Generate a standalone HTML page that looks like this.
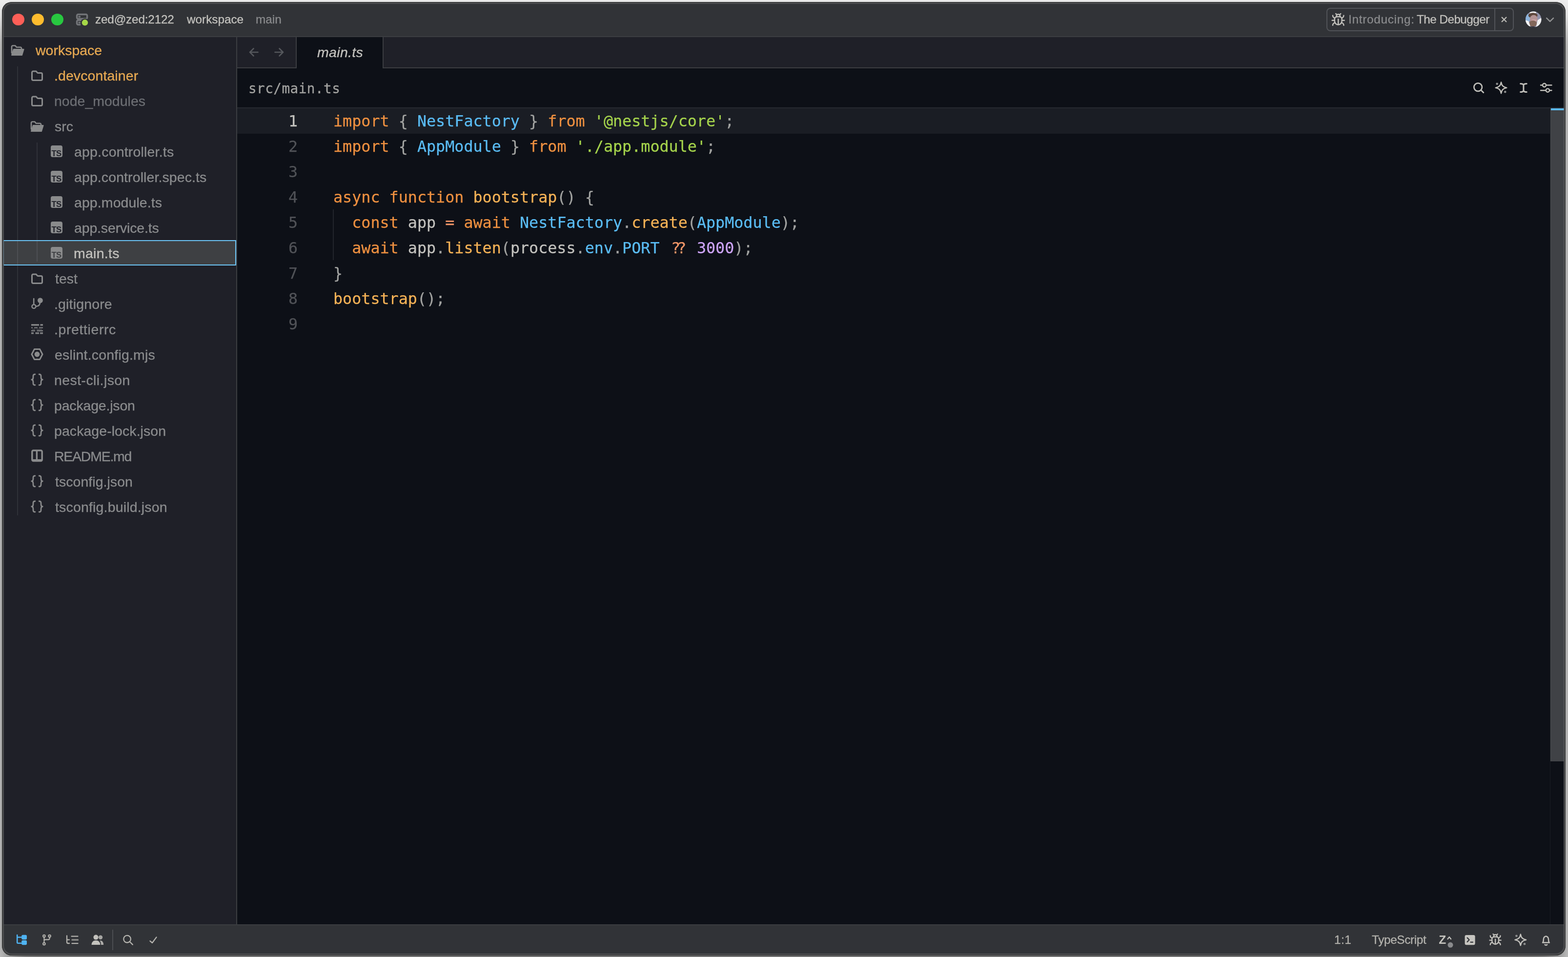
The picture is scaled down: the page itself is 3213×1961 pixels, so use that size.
<!DOCTYPE html>
<html lang="en">
<head>
<meta charset="utf-8">
<title>main.ts — workspace</title>
<style>
html,body{margin:0;padding:0}
body{width:3213px;height:1961px;overflow:hidden;position:relative;background:#f0f0f0;
  font-family:"Liberation Sans",sans-serif;}
#win{position:absolute;left:4px;top:4px;width:3204px;height:1954px;border-radius:20px;overflow:hidden;background:#313337;box-shadow:0 44px 60px rgba(0,0,0,.56)}
#c{position:absolute;left:-4px;top:-4px;width:3213px;height:1961px}
.t,.cl,.ln{will-change:transform}
.cl,.ln{-webkit-text-stroke:0.25px currentColor}
#c div{position:absolute;box-sizing:border-box}
#ring{position:absolute;left:0;top:0;right:0;bottom:0;border-radius:20px;pointer-events:none;
  box-shadow:inset 0 0 0 1px #323333,inset 0 0 0 2px #474849,inset 0 0 0 3px rgba(66,67,69,.9),inset 0 0 0 4px rgba(98,99,101,.72)}
.t{white-space:pre;line-height:1;-webkit-text-stroke:0.3px currentColor}
svg{position:absolute;left:0;top:0;overflow:visible}
/* title bar */
#titlebar{left:6px;top:6px;width:3201px;height:69px;background:#313337}
#tb-border{left:6px;top:74.300px;width:3201px;height:2px;background:#3b3d41}
.tl{width:24.600px;height:24.600px;border-radius:50%;top:27.600px}
/* sidebar */
#sidebar{left:6px;top:76px;width:478px;height:1818px;background:#1f2028}
#sb-border{left:484px;top:76px;width:2px;height:1818px;background:#3b3d41}
#sel{left:6px;top:492px;width:478px;height:52px;background:#3e4043;border:2px solid #6cc4f4}
.guide{width:2px;background:#2f3138}
/* editor */
#tabbar{left:486px;top:76px;width:2721px;height:63px;background:#1f2028}
#tab-border{left:486px;top:138px;width:2721px;height:2px;background:#3b3d41}
#nav-border{left:606px;top:76px;width:2px;height:64px;background:#3b3d41}
#tab{left:608px;top:76px;width:176px;height:64px;background:#0d1017}
#tab-r{left:784px;top:76px;width:2px;height:64px;background:#3b3d41}
#editor{left:486px;top:140px;width:2721px;height:1754px;background:#0d1017}
#tool-border{left:486px;top:219.500px;width:2721px;height:2px;background:#262930}
#activeline{left:486px;top:221.500px;width:2691px;height:52px;background:#1a1d24}
.ln{left:486px;width:124px;height:52px;line-height:52px;text-align:right;font-family:"DejaVu Sans Mono","Liberation Mono",monospace;font-size:31.73px;padding-top:1.3px}
.cl{left:682.6px;height:52px;line-height:52px;white-space:pre;font-family:"DejaVu Sans Mono","Liberation Mono",monospace;font-size:31.73px;color:#c3c2be;padding-top:1.3px}
.kw{color:#ee9040}
.fn{color:#f5b256}
.st{color:#a5d34c}
.ty{color:#5abcf4}
.num{color:#cda4f7}
.pu{color:#a2a3a1}
.op{color:#f29668}
.prop{color:#5abcf4}
.var{color:#c3c2be}
#cguide{left:682px;top:429px;width:2px;height:104px;background:#22252c}
#sb-track{left:3176px;top:221px;width:1px;height:1673px;background:#1a1d23}
#sb-thumb{left:3177px;top:222px;width:29.500px;height:1337.500px;background:#404246;box-shadow:inset 1px -1px 0 #484a4e}
#sb-mark{left:3178px;top:222px;width:28px;height:4px;background:#5ab9f0}
/* status bar */
#status{left:6px;top:1894px;width:3201px;height:62px;background:#313337}
#st-border{left:6px;top:1894px;width:3201px;height:2px;background:#3b3d41}
#st-div{left:230px;top:1905px;width:2px;height:42px;background:#4b4d51}
/* banner */
#banner{left:2718px;top:16px;width:384px;height:48px;border:2px solid #515358;border-radius:8px}
#banner-div{left:3062px;top:17px;width:2px;height:46px;background:#515358}
#avatar{left:3126px;top:24px;width:32px;height:32px;border-radius:50%;overflow:hidden;
  background:
   radial-gradient(circle at 78% 82%,#f2f2f2 0,#f2f2f2 18%,rgba(242,242,242,0) 34%),
   radial-gradient(circle at 52% 58%,#c59a86 0,#b88a76 26%,rgba(150,105,85,0) 48%),
   radial-gradient(circle at 50% 30%,#5a4336 0,#5a4336 30%,rgba(90,67,54,0) 52%),
   linear-gradient(135deg,#8fb0dc 0%,#6f8dbd 45%,#7a6a66 70%,#d8d8d8 100%)}
</style>
</head>
<body>
<div id="win">
<div id="c">
<div id="titlebar"></div><div id="tb-border"></div>
<div class="tl" style="left:25.400px;background:#fe5f57"></div>
<div class="tl" style="left:65.400px;background:#febc2e"></div>
<div class="tl" style="left:105.400px;background:#28c840"></div>
<div id="banner"></div><div id="banner-div"></div>

<div id="sidebar"></div><div id="sb-border"></div>
<div class="guide" style="left:34.5px;top:136px;height:920px"></div>
<div class="guide" style="left:74.5px;top:292px;height:244px"></div>
<div id="sel"></div>
<div class="guide" style="left:34.5px;top:494px;height:48px;background:#4d4f53"></div>
<div class="guide" style="left:74.5px;top:494px;height:42px;background:#4d4f53"></div>

<div id="tabbar"></div><div id="tab-border"></div><div id="nav-border"></div>
<div id="editor"></div>
<div id="tab"></div><div id="tab-r"></div>
<div id="tool-border"></div>
<div id="activeline"></div>
<div id="cguide"></div>
<div id="sb-track"></div><div id="sb-thumb"></div><div id="sb-mark"></div>
<div class="ln" style="top:221px;color:#c3c2be">1</div>
<div class="cl" style="top:221px"><span class="kw">import</span> <span class="pu">{</span> <span class="ty">NestFactory</span> <span class="pu">}</span> <span class="kw">from</span> <span class="st">'@nestjs/core'</span><span class="pu">;</span></div>
<div class="ln" style="top:273px;color:#505257">2</div>
<div class="cl" style="top:273px"><span class="kw">import</span> <span class="pu">{</span> <span class="ty">AppModule</span> <span class="pu">}</span> <span class="kw">from</span> <span class="st">'./app.module'</span><span class="pu">;</span></div>
<div class="ln" style="top:325px;color:#505257">3</div>
<div class="ln" style="top:377px;color:#505257">4</div>
<div class="cl" style="top:377px"><span class="kw">async</span> <span class="kw">function</span> <span class="fn">bootstrap</span><span class="pu">()</span> <span class="pu">{</span></div>
<div class="ln" style="top:429px;color:#505257">5</div>
<div class="cl" style="top:429px">  <span class="kw">const</span> <span class="var">app</span> <span class="op">=</span> <span class="kw">await</span> <span class="ty">NestFactory</span><span class="pu">.</span><span class="fn">create</span><span class="pu">(</span><span class="ty">AppModule</span><span class="pu">);</span></div>
<div class="ln" style="top:481px;color:#505257">6</div>
<div class="cl" style="top:481px">  <span class="kw">await</span> <span class="var">app</span><span class="pu">.</span><span class="fn">listen</span><span class="pu">(</span><span class="var">process</span><span class="pu">.</span><span class="prop">env</span><span class="pu">.</span><span class="prop">PORT</span> <span class="op"><span style="position:relative;left:4.5px">?</span><span style="position:relative;left:-2.5px">?</span></span> <span class="num">3000</span><span class="pu">);</span></div>
<div class="ln" style="top:533px;color:#505257">7</div>
<div class="cl" style="top:533px"><span class="pu">}</span></div>
<div class="ln" style="top:585px;color:#505257">8</div>
<div class="cl" style="top:585px"><span class="fn">bootstrap</span><span class="pu">();</span></div>
<div class="ln" style="top:637px;color:#505257">9</div>

<div id="status"></div><div id="st-border"></div><div id="st-div"></div>

<div class="t" id="t_host" style="left:195.00px;top:27.93px;font-size:24.3px;color:#c3c2be;letter-spacing:-0.182px;font-family:'Liberation Sans', sans-serif;">zed@zed:2122</div>
<div class="t" id="t_ws" style="left:382.50px;top:27.93px;font-size:24.3px;color:#c3c2be;letter-spacing:0.000px;font-family:'Liberation Sans', sans-serif;">workspace</div>
<div class="t" id="t_branch" style="left:524.00px;top:27.93px;font-size:24.3px;color:#8a8b8d;letter-spacing:0.000px;font-family:'Liberation Sans', sans-serif;">main</div>
<div class="t" id="t_intro" style="left:2763.00px;top:27.93px;font-size:24.3px;color:#8a8b8d;letter-spacing:0.727px;font-family:'Liberation Sans', sans-serif;">Introducing:</div>
<div class="t" id="t_dbg" style="left:2903.00px;top:27.93px;font-size:24.3px;color:#c3c2be;letter-spacing:-0.546px;font-family:'Liberation Sans', sans-serif;">The Debugger</div>
<div class="t" id="s0" style="left:72.50px;top:89.37px;font-size:28.5px;color:#e6a852;letter-spacing:0.000px;font-family:'Liberation Sans', sans-serif;">workspace</div>
<div class="t" id="s1" style="left:111.00px;top:141.37px;font-size:28.5px;color:#e6a852;letter-spacing:0.084px;font-family:'Liberation Sans', sans-serif;">.devcontainer</div>
<div class="t" id="s2" style="left:111.00px;top:193.37px;font-size:28.5px;color:#6c6e73;letter-spacing:0.000px;font-family:'Liberation Sans', sans-serif;">node_modules</div>
<div class="t" id="s3" style="left:112.00px;top:245.37px;font-size:28.5px;color:#8a8b8d;letter-spacing:0.000px;font-family:'Liberation Sans', sans-serif;">src</div>
<div class="t" id="s4" style="left:151.50px;top:297.37px;font-size:28.5px;color:#8a8b8d;letter-spacing:0.187px;font-family:'Liberation Sans', sans-serif;">app.controller.ts</div>
<div class="t" id="s5" style="left:151.50px;top:349.37px;font-size:28.5px;color:#8a8b8d;letter-spacing:0.095px;font-family:'Liberation Sans', sans-serif;">app.controller.spec.ts</div>
<div class="t" id="s6" style="left:151.50px;top:401.37px;font-size:28.5px;color:#8a8b8d;letter-spacing:0.084px;font-family:'Liberation Sans', sans-serif;">app.module.ts</div>
<div class="t" id="s7" style="left:151.50px;top:453.37px;font-size:28.5px;color:#8a8b8d;letter-spacing:-0.153px;font-family:'Liberation Sans', sans-serif;">app.service.ts</div>
<div class="t" id="s8" style="left:150.50px;top:505.37px;font-size:28.5px;color:#c3c2be;letter-spacing:0.254px;font-family:'Liberation Sans', sans-serif;">main.ts</div>
<div class="t" id="s9" style="left:113.00px;top:557.37px;font-size:28.5px;color:#8a8b8d;letter-spacing:0.000px;font-family:'Liberation Sans', sans-serif;">test</div>
<div class="t" id="s10" style="left:111.00px;top:609.37px;font-size:28.5px;color:#8a8b8d;letter-spacing:0.161px;font-family:'Liberation Sans', sans-serif;">.gitignore</div>
<div class="t" id="s11" style="left:111.00px;top:661.37px;font-size:28.5px;color:#8a8b8d;letter-spacing:0.600px;font-family:'Liberation Sans', sans-serif;">.prettierrc</div>
<div class="t" id="s12" style="left:112.00px;top:713.37px;font-size:28.5px;color:#8a8b8d;letter-spacing:0.188px;font-family:'Liberation Sans', sans-serif;">eslint.config.mjs</div>
<div class="t" id="s13" style="left:111.00px;top:765.37px;font-size:28.5px;color:#8a8b8d;letter-spacing:0.416px;font-family:'Liberation Sans', sans-serif;">nest-cli.json</div>
<div class="t" id="s14" style="left:111.00px;top:817.37px;font-size:28.5px;color:#8a8b8d;letter-spacing:-0.182px;font-family:'Liberation Sans', sans-serif;">package.json</div>
<div class="t" id="s15" style="left:111.00px;top:869.37px;font-size:28.5px;color:#8a8b8d;letter-spacing:0.060px;font-family:'Liberation Sans', sans-serif;">package-lock.json</div>
<div class="t" id="s16" style="left:111.00px;top:921.37px;font-size:28.5px;color:#8a8b8d;letter-spacing:-1.250px;font-family:'Liberation Sans', sans-serif;">README.md</div>
<div class="t" id="s17" style="left:113.00px;top:973.37px;font-size:28.5px;color:#8a8b8d;letter-spacing:0.040px;font-family:'Liberation Sans', sans-serif;">tsconfig.json</div>
<div class="t" id="s18" style="left:113.00px;top:1025.37px;font-size:28.5px;color:#8a8b8d;letter-spacing:0.167px;font-family:'Liberation Sans', sans-serif;">tsconfig.build.json</div>
<div class="t" id="tabtxt" style="left:650.00px;top:92.87px;font-size:28.5px;color:#c3c2be;letter-spacing:0.333px;font-family:'Liberation Sans', sans-serif;font-style:italic;">main.ts</div>
<div class="t" id="crumb" style="left:509.00px;top:168.42px;font-size:27.6px;color:#a2a2a0;letter-spacing:0.500px;font-family:'DejaVu Sans Mono', 'Liberation Mono', monospace;">src/main.ts</div>
<div class="t" id="st_pos" style="left:2734.00px;top:1914.43px;font-size:24.3px;color:#b4b3ae;letter-spacing:0.500px;font-family:'Liberation Sans', sans-serif;">1:1</div>
<div class="t" id="st_lang" style="left:2811.00px;top:1914.43px;font-size:24.3px;color:#b4b3ae;letter-spacing:-0.333px;font-family:'Liberation Sans', sans-serif;">TypeScript</div>

<svg width="3213" height="1961" viewBox="0 0 3213 1961">
<!-- sidebar icons -->
<g transform="translate(22.00 91.50)" stroke="#8a8b8c" stroke-linejoin="round" stroke-linecap="round"><path d="M2 17V4.2a2.2 2.2 0 0 1 2.2-2.2h5l2.6 3.2h8a2.2 2.2 0 0 1 2.2 2.2v2" fill="none" stroke-width="2.6"/><path d="M2.2 21.3L6 9.6h20.4l-3.6 11.7z" fill="#8a8b8c" stroke-width="2.4"/></g>
<path transform="translate(64.00 144.00)" d="M1.5 4.5a2.5 2.5 0 0 1 2.5-2.5h5.2a2 2 0 0 1 1.6.8l1.4 1.9a2 2 0 0 0 1.6.8h6.2a2.5 2.5 0 0 1 2.5 2.5v10a2.5 2.5 0 0 1-2.5 2.5h-16a2.5 2.5 0 0 1-2.5-2.5z" fill="none" stroke="#8a8b8c" stroke-width="3" stroke-linejoin="round"/>
<path transform="translate(64.00 196.00)" d="M1.5 4.5a2.5 2.5 0 0 1 2.5-2.5h5.2a2 2 0 0 1 1.6.8l1.4 1.9a2 2 0 0 0 1.6.8h6.2a2.5 2.5 0 0 1 2.5 2.5v10a2.5 2.5 0 0 1-2.5 2.5h-16a2.5 2.5 0 0 1-2.5-2.5z" fill="none" stroke="#8a8b8c" stroke-width="3" stroke-linejoin="round"/>
<g transform="translate(62.00 247.50)" stroke="#8a8b8c" stroke-linejoin="round" stroke-linecap="round"><path d="M2 17V4.2a2.2 2.2 0 0 1 2.2-2.2h5l2.6 3.2h8a2.2 2.2 0 0 1 2.2 2.2v2" fill="none" stroke-width="2.6"/><path d="M2.2 21.3L6 9.6h20.4l-3.6 11.7z" fill="#8a8b8c" stroke-width="2.4"/></g>
<g transform="translate(104.00 298.00)"><rect x="0" y="0" width="24" height="24" rx="4" fill="#8a8b8c"/><text x="11.6" y="22" font-family="Liberation Sans, sans-serif" font-weight="700" font-size="16.8" text-anchor="middle" fill="#1f2028" letter-spacing="-0.7">TS</text></g>
<g transform="translate(104.00 350.00)"><rect x="0" y="0" width="24" height="24" rx="4" fill="#8a8b8c"/><text x="11.6" y="22" font-family="Liberation Sans, sans-serif" font-weight="700" font-size="16.8" text-anchor="middle" fill="#1f2028" letter-spacing="-0.7">TS</text></g>
<g transform="translate(104.00 402.00)"><rect x="0" y="0" width="24" height="24" rx="4" fill="#8a8b8c"/><text x="11.6" y="22" font-family="Liberation Sans, sans-serif" font-weight="700" font-size="16.8" text-anchor="middle" fill="#1f2028" letter-spacing="-0.7">TS</text></g>
<g transform="translate(104.00 454.00)"><rect x="0" y="0" width="24" height="24" rx="4" fill="#8a8b8c"/><text x="11.6" y="22" font-family="Liberation Sans, sans-serif" font-weight="700" font-size="16.8" text-anchor="middle" fill="#1f2028" letter-spacing="-0.7">TS</text></g>
<g transform="translate(104.00 506.00)"><rect x="0" y="0" width="24" height="24" rx="4" fill="#8a8b8c"/><text x="11.6" y="22" font-family="Liberation Sans, sans-serif" font-weight="700" font-size="16.8" text-anchor="middle" fill="#3e4043" letter-spacing="-0.7">TS</text></g>
<path transform="translate(64.00 560.00)" d="M1.5 4.5a2.5 2.5 0 0 1 2.5-2.5h5.2a2 2 0 0 1 1.6.8l1.4 1.9a2 2 0 0 0 1.6.8h6.2a2.5 2.5 0 0 1 2.5 2.5v10a2.5 2.5 0 0 1-2.5 2.5h-16a2.5 2.5 0 0 1-2.5-2.5z" fill="none" stroke="#8a8b8c" stroke-width="3" stroke-linejoin="round"/>
<g transform="translate(64.00 609.90)" stroke="#8a8b8c" stroke-width="2.6" fill="none" stroke-linecap="round"><path d="M5.2 2.2v11.3"/><circle cx="5.4" cy="18" r="3.9"/><circle cx="18.4" cy="5.7" r="5.4" fill="#8a8b8c" stroke="none"/><path d="M17.8 10.5c0 5-3.5 7-8.3 7.3"/></g>
<g transform="translate(64.00 664.00)" fill="#8a8b8c"><rect x="0" y="0.2" width="16" height="3.2" opacity="1"/><rect x="18.5" y="0.2" width="5.5" height="3.2" opacity="1"/><rect x="0" y="6.4" width="3" height="2.2" opacity="0.85"/><rect x="6" y="6.4" width="7" height="2.2" opacity="0.85"/><rect x="16" y="6.4" width="8" height="2.2" opacity="0.85"/><rect x="2" y="10" width="6" height="1.4" opacity="0.45"/><rect x="11" y="10" width="11" height="1.4" opacity="0.45"/><rect x="0" y="12.6" width="8" height="2.4" opacity="0.9"/><rect x="11.5" y="12.6" width="12.5" height="2.4" opacity="0.9"/><rect x="0" y="17" width="5" height="3.4" opacity="0.9"/><rect x="8.5" y="17" width="7.5" height="3.4" opacity="0.9"/><rect x="18" y="17" width="6" height="3.4" opacity="0.9"/></g>
<g transform="translate(76.00 726.00)"><path d="M-11 0L-5.6 -10.4H5.6L11 0L5.6 10.4H-5.6Z" fill="none" stroke="#8a8b8c" stroke-width="3" stroke-linejoin="round"/><circle r="5.4" fill="#8a8b8c"/></g>
<g transform="translate(76.00 778.00)" fill="none" stroke="#8a8b8c" stroke-width="2.8" stroke-linecap="round" stroke-linejoin="round"><path d="M-4.2 -11C-8.4 -11 -8 -8.4 -8 -5.4C-8 -2.2 -8.6 0 -11.2 0C-8.6 0 -8 2.2 -8 5.4C-8 8.4 -8.4 11 -4.2 11"/><path d="M4.2 -11C8.4 -11 8 -8.4 8 -5.4C8 -2.2 8.6 0 11.2 0C8.6 0 8 2.2 8 5.4C8 8.4 8.4 11 4.2 11"/></g>
<g transform="translate(76.00 830.00)" fill="none" stroke="#8a8b8c" stroke-width="2.8" stroke-linecap="round" stroke-linejoin="round"><path d="M-4.2 -11C-8.4 -11 -8 -8.4 -8 -5.4C-8 -2.2 -8.6 0 -11.2 0C-8.6 0 -8 2.2 -8 5.4C-8 8.4 -8.4 11 -4.2 11"/><path d="M4.2 -11C8.4 -11 8 -8.4 8 -5.4C8 -2.2 8.6 0 11.2 0C8.6 0 8 2.2 8 5.4C8 8.4 8.4 11 4.2 11"/></g>
<g transform="translate(76.00 882.00)" fill="none" stroke="#8a8b8c" stroke-width="2.8" stroke-linecap="round" stroke-linejoin="round"><path d="M-4.2 -11C-8.4 -11 -8 -8.4 -8 -5.4C-8 -2.2 -8.6 0 -11.2 0C-8.6 0 -8 2.2 -8 5.4C-8 8.4 -8.4 11 -4.2 11"/><path d="M4.2 -11C8.4 -11 8 -8.4 8 -5.4C8 -2.2 8.6 0 11.2 0C8.6 0 8 2.2 8 5.4C8 8.4 8.4 11 4.2 11"/></g>
<g transform="translate(64.00 921.20)" fill="none" stroke="#8a8b8c" stroke-linejoin="round"><path d="M1.8 4.4a2.6 2.6 0 0 1 2.6-2.6h15.2a2.6 2.6 0 0 1 2.6 2.6v16.4a2.6 2.6 0 0 1-2.6 2.6h-15.2a2.6 2.6 0 0 1-2.6-2.6z" stroke-width="3.4"/><path d="M11.4 2v19" stroke-width="3.4"/><path d="M2.5 22h19" stroke-width="4.4"/></g>
<g transform="translate(76.00 986.00)" fill="none" stroke="#8a8b8c" stroke-width="2.8" stroke-linecap="round" stroke-linejoin="round"><path d="M-4.2 -11C-8.4 -11 -8 -8.4 -8 -5.4C-8 -2.2 -8.6 0 -11.2 0C-8.6 0 -8 2.2 -8 5.4C-8 8.4 -8.4 11 -4.2 11"/><path d="M4.2 -11C8.4 -11 8 -8.4 8 -5.4C8 -2.2 8.6 0 11.2 0C8.6 0 8 2.2 8 5.4C8 8.4 8.4 11 4.2 11"/></g>
<g transform="translate(76.00 1038.00)" fill="none" stroke="#8a8b8c" stroke-width="2.8" stroke-linecap="round" stroke-linejoin="round"><path d="M-4.2 -11C-8.4 -11 -8 -8.4 -8 -5.4C-8 -2.2 -8.6 0 -11.2 0C-8.6 0 -8 2.2 -8 5.4C-8 8.4 -8.4 11 -4.2 11"/><path d="M4.2 -11C8.4 -11 8 -8.4 8 -5.4C8 -2.2 8.6 0 11.2 0C8.6 0 8 2.2 8 5.4C8 8.4 8.4 11 4.2 11"/></g>

<!-- title: remote server icon -->
<g fill="none" stroke="#727478" stroke-width="3.500" stroke-linejoin="round">
 <rect x="157.6" y="29.6" width="21" height="9" rx="2.6"/>
 <path d="M167 41.6h-6.8a2.6 2.6 0 0 0-2.6 2.6v3.8a2.6 2.6 0 0 0 2.6 2.6h5"/>
 <path d="M162 34.2h1.5M162 46.2h1.5" stroke-linecap="round"/>
</g>
<circle cx="174" cy="46.3" r="8.4" fill="#313337"/>
<circle cx="174" cy="46.3" r="6.2" fill="#a6d848"/>

<!-- title: banner bug icon -->
<g transform="translate(2727.2 25.6) scale(1.25)" fill="none" stroke="#c2c1bc" stroke-width="2" stroke-linecap="round" stroke-linejoin="round">
 <path d="m8 2 1.88 1.88"/><path d="M14.12 3.88 16 2"/><path d="M9 7.13v-1a3.003 3.003 0 1 1 6 0v1"/>
 <path d="M12 20c-3.3 0-6-2.7-6-6v-3a4 4 0 0 1 4-4h4a4 4 0 0 1 4 4v3c0 3.3-2.7 6-6 6"/><path d="M12 20v-9"/>
 <path d="M6.53 9C4.6 8.8 3 7.1 3 5"/><path d="M6 13H2"/><path d="M3 21c0-2.1 1.7-3.9 3.8-4"/>
 <path d="M20.97 5c0 2.1-1.6 3.8-3.5 4"/><path d="M22 13h-4"/><path d="M17.2 17c2.1.1 3.8 1.9 3.8 4"/>
</g>
<!-- banner close x -->
<path d="M3077 35l10 10M3087 35l-10 10" stroke="#bdbcb7" stroke-width="2.3" fill="none"/>
<!-- avatar -->
<defs><clipPath id="avc"><circle cx="0" cy="0" r="16.200"/></clipPath></defs>
<g transform="translate(3142.200 39.800)" clip-path="url(#avc)">
 <rect x="-17" y="-17" width="34" height="34" fill="#9293ac"/>
 <ellipse cx="-13" cy="-3" rx="6.500" ry="9" fill="#8db4dc"/>
 <ellipse cx="-1.500" cy="-14.500" rx="7" ry="3.600" fill="#f2f2f2"/>
 <ellipse cx="-1" cy="-8.200" rx="9.500" ry="5.400" fill="#5e473b"/>
 <ellipse cx="0.500" cy="-0.500" rx="8" ry="8.500" fill="#b39394"/>
 <ellipse cx="1.200" cy="2.400" rx="5.200" ry="2.400" fill="#cba3a3"/>
 <ellipse cx="-1" cy="8.600" rx="8" ry="6.400" fill="#82675a"/>
 <ellipse cx="-2" cy="17.500" rx="8" ry="3.400" fill="#2e2f3e"/>
 <path d="M-17 1.500L-10 3.500L-6.500 13.500L-12 17H-17Z" fill="#f6f6f6"/>
 <path d="M17 -4L8.500 1.500L5 17H17Z" fill="#efefef"/>
</g>
<!-- avatar chevron -->
<path d="M3169.200 37.200l6.900 6.700 6.900-6.700" stroke="#929394" stroke-width="2.500" fill="none" stroke-linecap="round" stroke-linejoin="round"/>

<!-- nav arrows -->
<g stroke="#55575c" stroke-width="2.6" fill="none" stroke-linecap="round" stroke-linejoin="round">
 <path d="M528.5 107h-16.500M519.500 99.500l-7.500 7.500 7.500 7.500"/>
 <path d="M563.500 107h16.500M572.500 99.500l7.500 7.500-7.500 7.500"/>
</g>

<!-- toolbar icons -->
<g stroke="#c0bfba" stroke-width="2.7" fill="none" stroke-linecap="round" stroke-linejoin="round">
 <circle cx="3028.6" cy="178.6" r="8.3"/><path d="M3034.8 184.8l5 5"/>
 <path d="M3076 168.4c1.4 7.2 3.8 9.8 11.4 11.4c-7.6 1.6-10 4.2-11.4 11.4c-1.4-7.2-3.8-9.8-11.4-11.4c7.6-1.6 10-4.2 11.4-11.4z" stroke-width="2.4"/>
 <path d="M3115.6 171.6c3.4 0 5.4.8 6.3 2.6c.9-1.8 2.900-2.6 6.300-2.600M3115.600 188.600c3.400 0 5.400-.8 6.300-2.600c.9 1.8 2.900 2.600 6.300 2.600M3121.900 174.200v11.800" stroke-width="3"/>
 <path d="M3157 174.600h3.600M3168.400 174.600h11M3157 185.200h10.400M3175.300 185.200h4.100" stroke-width="2.500"/>
 <circle cx="3164.500" cy="174.600" r="3.600" stroke-width="2.400"/><circle cx="3171.400" cy="185.200" r="3.600" stroke-width="2.400"/>
</g>
<circle cx="3067.600" cy="171.800" r="2.300" fill="#8f9090"/><circle cx="3084.200" cy="188.200" r="2.300" fill="#8f9090"/>

<!-- status bar left -->
<g fill="#4fb3f2" stroke="none">
 <rect x="44.200" y="1915.800" width="10.800" height="9.400" rx="2.600"/><rect x="44.200" y="1926.800" width="10.800" height="9.400" rx="2.600"/>
</g>
<path d="M35.200 1916v15.400a1.400 1.400 0 0 0 1.400 1.400h7M35.200 1920.500h8.600" stroke="#4fb3f2" stroke-width="2.600" fill="none" stroke-linecap="round"/>
<g stroke="#b4b3ae" stroke-width="2.1" fill="none" stroke-linecap="round" stroke-linejoin="round">
 <circle cx="90.400" cy="1918" r="2.300"/><circle cx="101.600" cy="1918" r="2.300"/><circle cx="90.400" cy="1934" r="2.300"/>
 <path d="M90.400 1920.500v11M101.600 1920.500v2.300a2.600 2.600 0 0 1-2.600 2.600h-6a2.600 2.600 0 0 0-2.600 2.600"/>
 <path d="M137 1917.500v12.900a2.600 2.600 0 0 0 2.600 2.600h2.400M137 1925.600h5M146.500 1918.600h13M147.500 1933.200h12" stroke-width="2.300"/>
 <path d="M148 1925.900h11.500" stroke-width="3.400" stroke="#8e8e8b"/>
 <circle cx="260.600" cy="1924.200" r="7.300" stroke-width="2.300"/><path d="M266 1929.800l5.800 5.800" stroke-width="2.300"/>
 <path d="M307.400 1928.200l4.600 3.800l8.600-11.600" stroke-width="2.300"/>
</g>
<g fill="#c3c2bd">
 <circle cx="196.500" cy="1920.600" r="5"/><path d="M187.600 1936c0-5.600 3.600-9 8.900-9s8.900 3.400 8.900 9z"/>
 <circle cx="206" cy="1920.800" r="4.200" opacity=".8"/><path d="M204.500 1927.400c4.200-.6 7.700 2.800 7.700 8.600h-5.200c0-3.600-1-6.600-2.500-8.600z" opacity=".85"/>
</g>

<!-- status bar right -->
<text x="2948.300" y="1933.900" font-family="Liberation Sans, sans-serif" font-weight="700" font-size="24.500" fill="#c3c2bd">Z</text>
<path d="M2966.400 1924.200l3.400-4.200l3.400 4.200" stroke="#c3c2bd" stroke-width="2.200" fill="none" stroke-linecap="round" stroke-linejoin="round"/>
<circle cx="2972" cy="1936.300" r="7.600" fill="#313337"/><circle cx="2972" cy="1936.300" r="5.500" fill="#8a8b8d"/>
<rect x="3001.600" y="1915.900" width="21" height="20.400" rx="3.200" fill="#c6c5c0"/>
<path d="M3006.600 1921.600l4 4.200l-4 4.200M3013.400 1930.600h4.600" stroke="#313337" stroke-width="2.300" fill="none" stroke-linecap="round" stroke-linejoin="round"/>
<g transform="translate(3050.300 1911.700) scale(1.150)" fill="none" stroke="#c2c1bc" stroke-width="2.100" stroke-linecap="round" stroke-linejoin="round">
 <path d="m8 2 1.880 1.880"/><path d="M14.120 3.880 16 2"/><path d="M9 7.130v-1a3.003 3.003 0 1 1 6 0v1"/>
 <path d="M12 20c-3.300 0-6-2.700-6-6v-3a4 4 0 0 1 4-4h4a4 4 0 0 1 4 4v3c0 3.300-2.700 6-6 6"/><path d="M12 20v-9"/>
 <path d="M6.530 9C4.600 8.800 3 7.100 3 5"/><path d="M6 13H2"/><path d="M3 21c0-2.100 1.700-3.900 3.800-4"/>
 <path d="M20.970 5c0 2.100-1.600 3.800-3.500 4"/><path d="M22 13h-4"/><path d="M17.200 17c2.100.1 3.800 1.900 3.800 4"/>
</g>
<path d="M3115.800 1914.400c1.400 7.200 3.800 9.800 11.400 11.400c-7.600 1.600-10 4.200-11.400 11.400c-1.400-7.200-3.800-9.800-11.400-11.400c7.600-1.600 10-4.200 11.400-11.400z" stroke="#c2c1bc" stroke-width="2.400" fill="none" stroke-linejoin="round"/>
<circle cx="3107.400" cy="1917.800" r="2.300" fill="#8f9090"/><circle cx="3124" cy="1934.200" r="2.300" fill="#8f9090"/>
<g stroke="#c2c1bc" stroke-width="2.500" fill="none" stroke-linecap="round" stroke-linejoin="round">
 <path d="M3161 1931.600c1.600-1.600 1.800-3.400 1.800-6.600c0-3.400 2-6.600 5.100-6.600s5.100 3.200 5.100 6.600c0 3.200.2 5 1.800 6.600z"/>
 <path d="M3165.600 1935.800c1 1.200 3.600 1.200 4.600 0"/>
</g>
</svg>
</div>
<div id="ring"></div>
</div>
</body>
</html>
